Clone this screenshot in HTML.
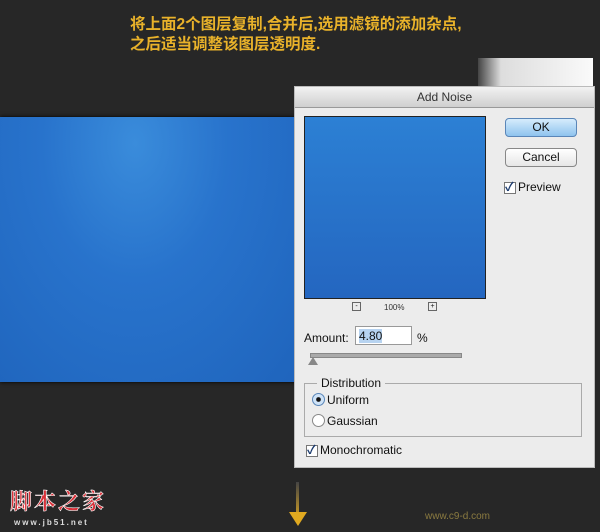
<!DOCTYPE html>
<html><head><meta charset="utf-8"><style>
body{margin:0;width:600px;height:532px;background:#272727;position:relative;overflow:hidden;font-family:"Liberation Sans","Noto Sans CJK SC",sans-serif}
.a{position:absolute}
.cap{left:130px;top:15px;color:#e9b22a;font-size:15.5px;font-weight:bold;line-height:20px;font-family:"Liberation Sans","Noto Sans CJK SC",sans-serif}
.band{left:0;top:117px;width:300px;height:265px;background:radial-gradient(ellipse at 45% 10%,#3a8cdb 0%,#2873cc 40%,#1f64bc 100%);box-shadow:0 0 4px #000}
.dlg{left:294px;top:86px;width:299px;height:380px;background:#ececec;border:1px solid #bbb;font-size:12px;color:#111}
.tb{left:0;top:0;width:299px;height:20px;background:linear-gradient(#f2f2f2,#cfcfcf);border-bottom:1px solid #999;text-align:center;line-height:20px;font-size:12px;color:#333}
.btn{width:70px;height:17px;border:1px solid #888;border-radius:4px;text-align:center;line-height:17px;font-size:12px;background:linear-gradient(#fff,#e6e6e6)}
.cb{width:10px;height:10px;border:1px solid #777;background:#fff;font-size:12px;line-height:9px;color:#1a3a6e;font-weight:bold}
</style></head><body>
<div class="a cap">将上面2个图层复制,合并后,选用滤镜的添加杂点,<br>之后适当调整该图层透明度.</div>
<div class="a" style="left:478px;top:58px;width:115px;height:40px;background:linear-gradient(90deg,#444,#ddd 20%,#fafafa)"></div>
<div class="a band"></div>
<div class="a dlg">
 <div class="a tb">Add Noise</div>
 <div class="a" style="left:9px;top:29px;width:180px;height:181px;border:1px solid #222;background:linear-gradient(#2c80d4,#2466c0)"></div>
 <div class="a btn" style="left:210px;top:31px;background:linear-gradient(#d6ecfc,#8fc3ee);border-color:#5a86b8">OK</div>
 <div class="a btn" style="left:210px;top:61px">Cancel</div>
 <div class="a cb" style="left:209px;top:95px">✓</div>
 <div class="a" style="left:223px;top:93px">Preview</div>
 <div class="a" style="left:57px;top:215px;width:7px;height:7px;border:1px solid #666;font-size:7px;line-height:7px;text-align:center">-</div>
 <div class="a" style="left:89px;top:216px;font-size:8px;color:#333">100%</div>
 <div class="a" style="left:133px;top:215px;width:7px;height:7px;border:1px solid #666;font-size:7px;line-height:7px;text-align:center">+</div>
 <div class="a" style="left:9px;top:244px">Amount:</div>
 <div class="a" style="left:60px;top:239px;width:57px;height:19px;background:#fff;border:1px solid #999;line-height:19px;padding-left:3px;box-sizing:border-box"><span style="background:#b7d3f0">4.80</span></div>
 <div class="a" style="left:122px;top:244px">%</div>
 <div class="a" style="left:15px;top:266px;width:150px;height:3px;background:#aaa;border:1px solid #888"></div>
 <div class="a" style="left:13px;top:270px;width:0;height:0;border-left:5px solid transparent;border-right:5px solid transparent;border-bottom:8px solid #888"></div>
 <div class="a" style="left:9px;top:296px;width:276px;height:52px;border:1px solid #aaa"></div>
 <div class="a" style="left:22px;top:289px;background:#ececec;padding:0 4px">Distribution</div>
 <div class="a" style="left:17px;top:306px;width:11px;height:11px;border:1px solid #5a86b8;border-radius:50%;background:radial-gradient(#111 25%,#cfe3f7 35%)"></div>
 <div class="a" style="left:32px;top:306px">Uniform</div>
 <div class="a" style="left:17px;top:327px;width:11px;height:11px;border:1px solid #888;border-radius:50%;background:#fff"></div>
 <div class="a" style="left:32px;top:327px">Gaussian</div>
 <div class="a cb" style="left:11px;top:358px">✓</div>
 <div class="a" style="left:25px;top:356px">Monochromatic</div>
</div>
<div class="a" style="left:10px;top:485px;color:#d8323a;font-size:22px;font-family:'Noto Serif CJK SC',serif;font-weight:bold;letter-spacing:2px;-webkit-text-stroke:0.6px #fff">脚本之家</div>
<div class="a" style="left:14px;top:518px;color:#ddd;font-size:8px;font-weight:bold;letter-spacing:2px">www.jb51.net</div>
<div class="a" style="left:296px;top:482px;width:3px;height:40px;background:linear-gradient(#444,#e0a920)"></div>
<div class="a" style="left:289px;top:512px;width:0;height:0;border-left:9px solid transparent;border-right:9px solid transparent;border-top:14px solid #e0a920"></div>
<div class="a" style="left:425px;top:511px;color:#8a7a40;font-size:10px">www.c9-d.com</div>
</body></html>
